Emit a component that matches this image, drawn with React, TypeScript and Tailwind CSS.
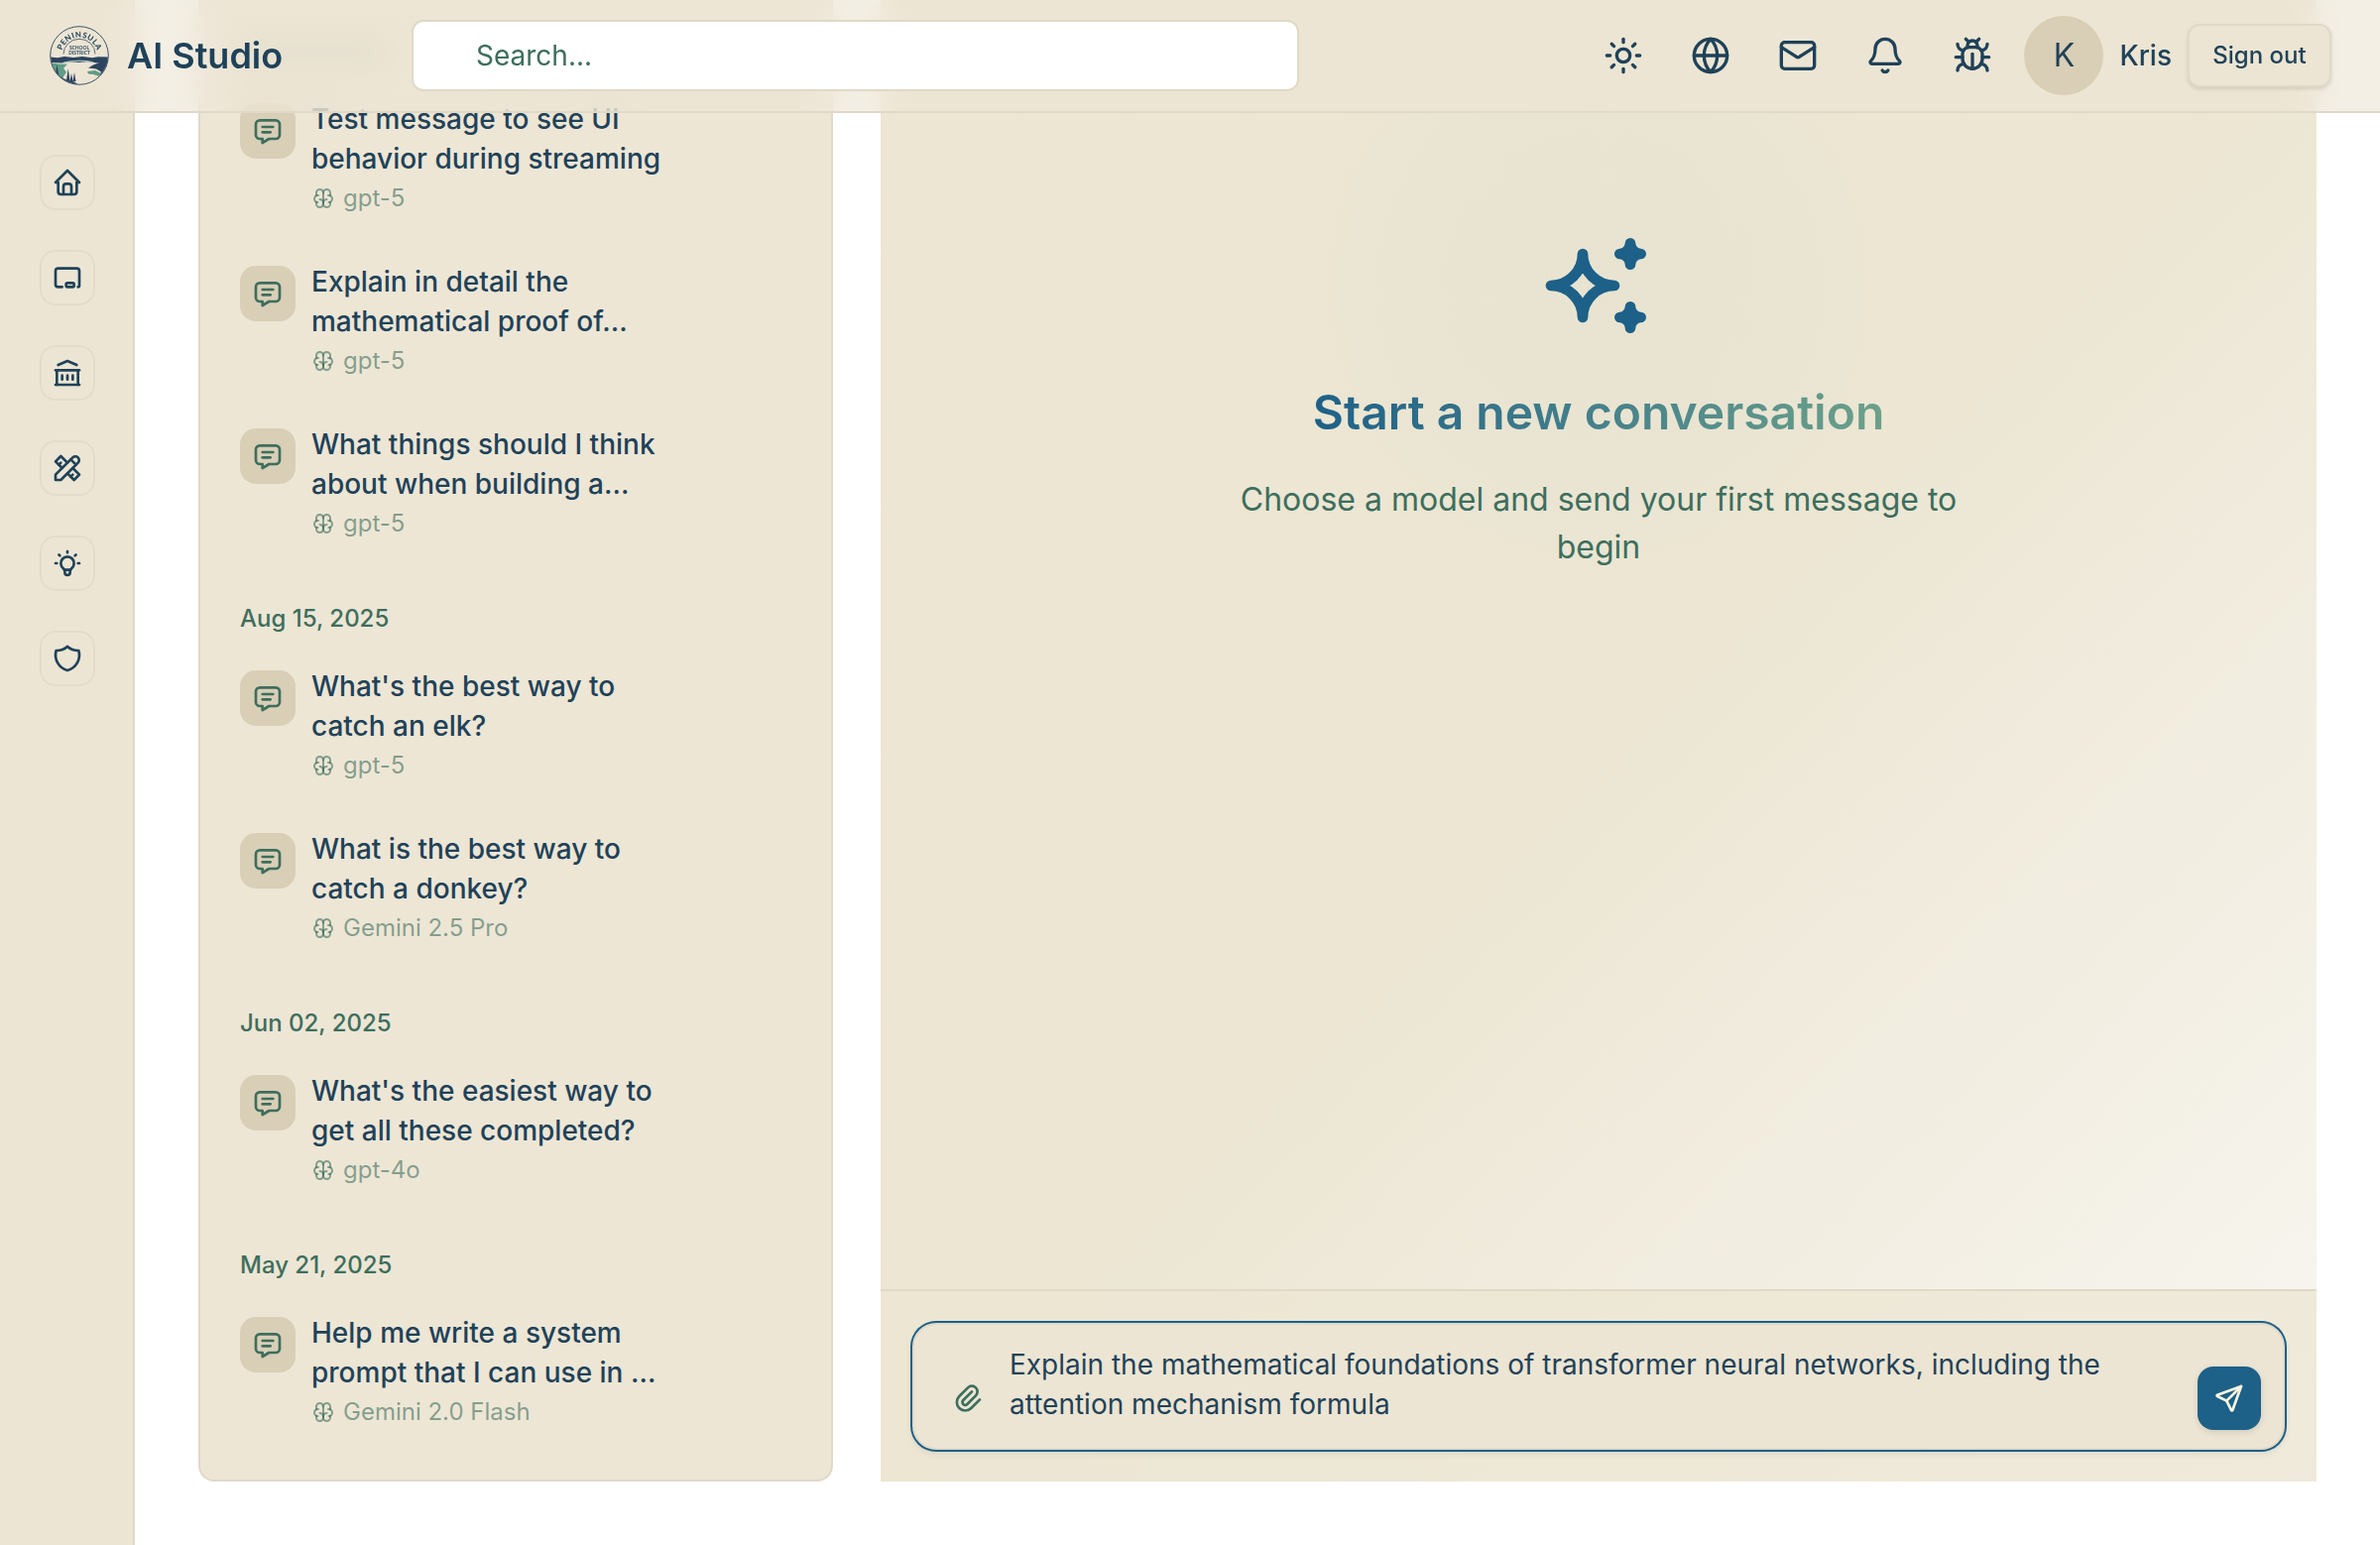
import type { ReactNode } from "react";
import { Bell, Bug, Globe, Mail, Sun } from "lucide-react";
import {
  TbBrain,
  TbBuildingBank,
  TbBulb,
  TbChalkboard,
  TbHome,
  TbMessage,
  TbPaperclip,
  TbSend,
  TbShield,
  TbSparkles,
  TbTools,
} from "react-icons/tb";

type Chat = { lines: [string, string]; model: string };
type Group = { date?: string; chats: Chat[] };

const groups: Group[] = [
  {
    chats: [
      { lines: ["Test message to see UI", "behavior during streaming"], model: "gpt-5" },
      { lines: ["Explain in detail the", "mathematical proof of..."], model: "gpt-5" },
      { lines: ["What things should I think", "about when building a..."], model: "gpt-5" },
    ],
  },
  {
    date: "Aug 15, 2025",
    chats: [
      { lines: ["What's the best way to", "catch an elk?"], model: "gpt-5" },
      { lines: ["What is the best way to", "catch a donkey?"], model: "Gemini 2.5 Pro" },
    ],
  },
  {
    date: "Jun 02, 2025",
    chats: [{ lines: ["What's the easiest way to", "get all these completed?"], model: "gpt-4o" }],
  },
  {
    date: "May 21, 2025",
    chats: [{ lines: ["Help me write a system", "prompt that I can use in ..."], model: "Gemini 2.0 Flash" }],
  },
];

const navIcons = [TbHome, TbChalkboard, TbBuildingBank, TbTools, TbBulb, TbShield];
const headerIcons = [Sun, Globe, Mail, Bell, Bug];

// Letters around the rim of the badge, with their angle from the top.
const rimLetters: [string, number][] = [
  ["P", -66],
  ["E", -50],
  ["N", -33],
  ["I", -18],
  ["N", -3],
  ["S", 15],
  ["U", 32],
  ["L", 49],
  ["A", 65],
];

function Logo() {
  return (
    <svg width="60" height="60" viewBox="0 0 60 60" className="shrink-0">
      <defs>
        <clipPath id="disc">
          <circle cx="30" cy="30" r="29" />
        </clipPath>
      </defs>
      <g clipPath="url(#disc)">
        <path d="M0 31.5l8 .8 7-1.2 9 .9 9-1 10 1.2 6-1 11 .3V38l-12-.6-9-1.4-9 1-10-.8-8 1.4-12-.6z" fill="#2c4460" />
        <path d="M14 37.2c9-2.4 22-2.4 30-.4" fill="none" stroke="#a9bdb9" strokeWidth="1.3" />
        <path d="M60 35l-9 2-7 2.5-5 3 8 1 5 3-2 4 10-3z" fill="#2c4460" />
        <path d="M38 46l8-1 6 3-2 3-6-2-5-.5z" fill="#5f9d86" />
        <path d="M0 37l9 1.500 9 .3-4 4 3 4-4 6L0 49z" fill="#5f9d86" />
        <path d="M0 44l5 2 4 4 7 4 9 2.500 7 5H0z" fill="#2c4460" />
        <path d="M5.500 51l2-12 2 12zM17 55l1.700-12 1.700 12zM20.500 56l1.500-8 1.500 8zM23.500 56l1.500-9 1.500 9z" fill="#2c4460" />
      </g>
      <path d="M14 28.5a16 15.2 0 0 1 32 0" fill="none" stroke="#4a6072" strokeWidth="0.9" />
      <circle cx="30" cy="30" r="29.3" fill="none" stroke="#3c5468" strokeWidth="1" />
      {rimLetters.map(([letter, angle]) => (
        <text
          key={angle}
          x="30"
          y="11.6"
          transform={`rotate(${angle} 30 30)`}
          textAnchor="middle"
          fontFamily="Lato"
          fontSize="7.800"
          fontWeight="900"
          fill="#2a4a60"
        >
          {letter}
        </text>
      ))}
      <text x="30" y="24" textAnchor="middle" fontFamily="Lato" fontSize="4.900" fontWeight="900" fill="#3a566a">
        SCHOOL
      </text>
      <text x="30" y="29" textAnchor="middle" fontFamily="Lato" fontSize="4.900" fontWeight="900" fill="#3a566a">
        DISTRICT
      </text>
    </svg>
  );
}

function Header() {
  return (
    <header className="absolute inset-x-0 top-0 z-10 flex h-[114px] items-center border-b-2 border-[#e0d9c8] bg-[#ece5d3]/60 pl-[50px] pr-[49px] backdrop-blur-[16px]">
      <div className="flex w-[365px] items-center gap-[18px]">
        <Logo />
        <span className="whitespace-nowrap text-[36px] leading-[44px] font-semibold">AI Studio</span>
      </div>
      <div className="flex h-[72px] w-[895px] items-center rounded-xl border-2 border-[#e0d9c8] bg-white pl-[63px] text-[28px] text-[#3d6e5d]">
        Search...
      </div>
      <div className="ml-auto flex items-center">
        <div className="mr-8 flex gap-12">
          {headerIcons.map((Icon, i) => (
            <Icon key={i} size={40} strokeWidth={2} />
          ))}
        </div>
        <div className="flex size-20 items-center justify-center rounded-full bg-[#d9ceb6] text-[32px]">K</div>
        <span className="ml-4 text-[28px] font-medium">Kris</span>
        <button className="ml-4 flex h-16 w-[145px] items-center justify-center whitespace-nowrap rounded-xl border-2 border-[#e0d9c8] bg-[#ece5d3] text-[24px] font-medium shadow-[0_2px_4px_rgba(0,0,0,0.12)]">
          Sign out
        </button>
      </div>
    </header>
  );
}

function Sidebar() {
  return (
    <nav className="flex w-[136px] shrink-0 flex-col items-center gap-10 border-r-2 border-[#e0d9c8] bg-[#ece5d3] pt-[156px] pl-0.5">
      {navIcons.map((Icon, i) => (
        <div key={i} className="flex size-14 items-center justify-center rounded-2xl border-2 border-[#e3dccb]">
          <Icon size={32} />
        </div>
      ))}
    </nav>
  );
}

function ChatItem({ chat }: { chat: Chat }) {
  return (
    <div className="flex gap-4 py-6">
      <div className="mt-1 flex size-14 shrink-0 items-center justify-center rounded-2xl bg-[#d9ceb6] text-[#3d6e5d]">
        <TbMessage size={32} />
      </div>
      <div className="flex flex-col">
        {chat.lines.map((line) => (
          <span key={line} className="whitespace-nowrap text-[28px] leading-10 font-medium">
            {line}
          </span>
        ))}
        <div className="mt-1 flex items-center gap-2 text-[24px] leading-8 text-[#3d6e5d]/60">
          <TbBrain size={24} />
          <span>{chat.model}</span>
        </div>
      </div>
    </div>
  );
}

function ChatList() {
  return (
    <aside className="mb-16 flex w-[640px] shrink-0 flex-col rounded-b-2xl border-2 border-t-0 border-[#e0d9c8] bg-[#ede6d5] px-10">
      <div className="mt-11 mb-4 h-4 w-36 shrink-0 bg-[#3d6e5d]/20" />
      {groups.map((group, i) => (
        <Section key={i} date={group.date}>
          {group.chats.map((chat) => (
            <ChatItem key={chat.lines[0]} chat={chat} />
          ))}
        </Section>
      ))}
    </aside>
  );
}

function Section({ date, children }: { date?: string; children: ReactNode }) {
  return (
    <section>
      {date && <h3 className="mt-10 mb-2 text-[24px] leading-8 font-medium text-[#3d6e5d]">{date}</h3>}
      {children}
    </section>
  );
}

function Conversation() {
  return (
    <main className="mb-16 flex w-[1448px] shrink-0 flex-col bg-linear-135 from-[#ece6d3] via-[#ece6d3] via-50% to-[#f8f6f1]">
      <div className="flex flex-1 flex-col items-center bg-[radial-gradient(circle_at_50%_288px,rgba(108,161,138,0.035),rgba(108,161,138,0.025)_160px,transparent_320px)] pt-[224px]">
        <TbSparkles size={128} className="text-[#1d6088]" />
        <h1 className="mt-8 bg-linear-to-r from-[#1d6088] to-[#6ca18a] bg-clip-text text-[48px] leading-[64px] font-semibold text-transparent">
          Start a new conversation
        </h1>
        <p className="mt-8 w-[768px] text-center text-[32px] leading-[48px] text-[#3d6e5d]">
          Choose a model and send your first message to begin
        </p>
      </div>
      <div className="h-[194px] border-t-2 border-[#e0d9c8] bg-[#ece5d3]/75 px-8 pt-8">
        <div className="flex h-32 rounded-3xl border-2 border-[#e0d9c8] bg-[#ece5d3] px-[22px] shadow-[0_0_0_2px_#1d6088,0_4px_6px_1px_rgba(0,0,0,0.06)]">
          <TbPaperclip size={32} className="mt-[58px] ml-4 shrink-0 text-[#3d6e5d]" />
          <p className="mt-5 ml-[26px] w-[1174px] text-[28px] leading-10">
            Explain the mathematical foundations of transformer neural networks, including the attention mechanism
            formula
          </p>
          <button className="mt-[42px] ml-auto flex size-16 shrink-0 items-center justify-center rounded-2xl bg-[#1d6088] text-[#fff8e0] shadow-[0_2px_6px_rgba(0,0,0,0.12)]">
            <TbSend size={32} />
          </button>
        </div>
      </div>
    </main>
  );
}

export default function App() {
  return (
    <div className="relative h-[1558px] w-[2400px] overflow-hidden bg-white font-['Inter',sans-serif] text-[#1f4259]">
      <div className="flex h-full">
        <Sidebar />
        <div className="ml-16 flex gap-12">
          <ChatList />
          <Conversation />
        </div>
      </div>
      <Header />
    </div>
  );
}
